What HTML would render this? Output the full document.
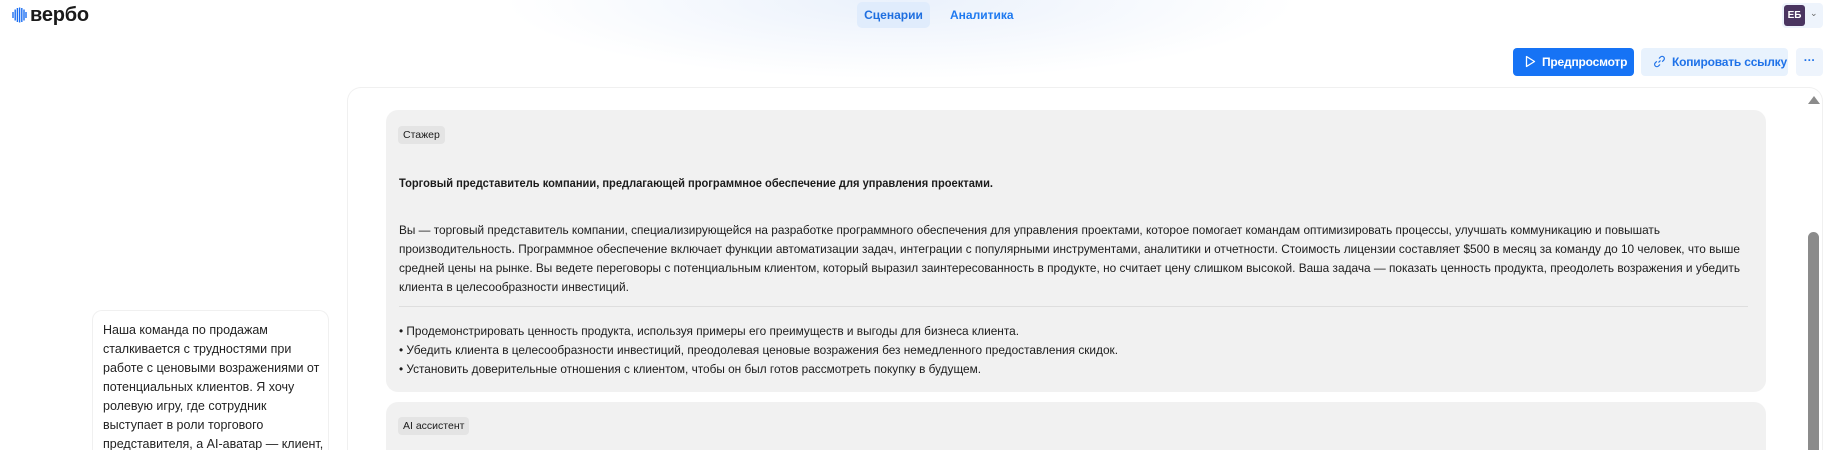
<!DOCTYPE html>
<html><head><meta charset="utf-8"><style>
*{box-sizing:border-box;margin:0;padding:0}
html,body{width:1836px;height:450px;overflow:hidden}
body{background:#fff;font-family:"Liberation Sans",sans-serif;color:#1b1b1b;position:relative}
#wrap{position:absolute;left:0;top:0;width:1836px;height:450px;overflow:hidden}
.abs{position:absolute}
.glow{left:500px;top:-80px;width:800px;height:160px;border-radius:50%;background:radial-gradient(ellipse at center,rgba(225,235,250,.7),rgba(255,255,255,0) 70%)}
.logo{left:30px;top:4px;font-size:20px;font-weight:bold;letter-spacing:-.2px;color:#1a1a1a}
.nav1{left:857px;top:2px;width:73px;height:26px;border-radius:5px;background:#e0ecfc;color:#1f6fe0;font-size:12px;font-weight:bold;line-height:26px;text-align:center}
.nav2{left:950px;top:2px;height:26px;color:#1f7af0;font-size:12px;font-weight:bold;line-height:26px}
.avw{left:1782px;top:3px;width:41px;height:25px;border-radius:4px;background:#eef4fc}
.av{left:1784px;top:5px;width:21px;height:21px;border-radius:3px;background:#4a3560;color:#fff;font-size:10px;font-weight:bold;text-align:center;line-height:21px}
.btn{top:48px;height:28px;border-radius:4px;font-size:12px;font-weight:bold;line-height:28px;white-space:nowrap;letter-spacing:-.2px}
.panel{left:347px;top:87px;width:1476px;height:363px;border:1px solid #f0f0f0;border-bottom:none;border-radius:14px 14px 0 0;background:#fff}
.card{left:386px;top:110px;width:1380px;height:282px;background:#f1f1f1;border-radius:12px}
.card2{left:386px;top:402px;width:1380px;height:48px;background:#f1f1f1;border-radius:12px 12px 0 0}
.tag{background:#e4e4e4;border-radius:4px;font-size:10.5px;padding:0 5px;height:18px;line-height:18px}
.sb{left:1808px;top:232px;width:11px;height:218px;background:#8b8b8b;border-radius:6px 6px 0 0}
.left{left:92px;top:310px;width:237px;height:140px;border:1px solid #f0f0f0;border-bottom:none;border-radius:10px 10px 0 0;background:#fff;padding:10px 10px;font-size:12.5px;line-height:19px;color:#222;white-space:nowrap;overflow:hidden}
svg text{font-family:"Liberation Sans",sans-serif}
</style></head><body><div id="wrap">
<div class="abs glow"></div>
<div class="abs" style="left:12px;top:6px"><svg width="15" height="18" viewBox="0 0 15 18"><g stroke="#1d6ff2" stroke-width="1.4"><line x1="1" y1="6" x2="1" y2="12"/><line x1="3.2" y1="3.5" x2="3.2" y2="14.5"/><line x1="5.4" y1="2" x2="5.4" y2="16"/><line x1="7.6" y1="1.5" x2="7.6" y2="16.5"/><line x1="9.8" y1="2" x2="9.8" y2="16"/><line x1="12" y1="3.5" x2="12" y2="14.5"/><line x1="14" y1="6" x2="14" y2="12"/></g></svg></div>
<div class="abs logo">вербо</div>
<div class="abs nav1">Сценарии</div>
<div class="abs nav2">Аналитика</div>
<div class="abs avw"></div>
<div class="abs av">ЕБ</div>
<div class="abs" style="left:1810px;top:8px;font-size:9px;color:#666">⌄</div>
<div class="abs btn" style="left:1513px;width:121px;background:#1673f5;color:#fff;padding-left:12px"><svg width="11" height="13" viewBox="0 0 11 13" style="vertical-align:-2px;margin-right:6px"><path d="M1.5 1.5v10l8-5z" fill="none" stroke="#fff" stroke-width="1.3" stroke-linejoin="round"/></svg>Предпросмотр</div>
<div class="abs btn" style="left:1641px;width:147px;background:#e8f2fd;color:#1f72e8;padding-left:12px"><svg width="13" height="13" viewBox="0 0 13 13" style="vertical-align:-2px;margin-right:6px"><g fill="none" stroke="#1f72e8" stroke-width="1.2"><path d="M5.5 7.5l2-2"/><path d="M6 3.5l1.5-1.5a2.2 2.2 0 013.2 3.2L9.2 6.7"/><path d="M7 9.5L5.5 11a2.2 2.2 0 01-3.2-3.2L3.8 6.3"/></g></svg>Копировать ссылку</div>
<div class="abs btn" style="left:1796px;width:27px;background:#eef4fc;color:#1f72e8;text-align:center;font-size:12px;line-height:25px">···</div>
<div class="abs panel"></div>
<div class="abs" style="left:1808px;top:96px;width:0;height:0;border-left:6px solid transparent;border-right:6px solid transparent;border-bottom:8px solid #8b8b8b"></div>
<div class="abs sb"></div>
<div class="abs card"></div>
<div class="abs tag" style="left:398px;top:126px">Стажер</div>
<div class="abs card2"></div>
<div class="abs tag" style="left:398px;top:417px">AI ассистент</div>
<svg class="abs" style="left:0;top:0" width="1836" height="450">
<g font-size="12.3" fill="#1b1b1b">
<text x="399" y="187" font-weight="bold" textLength="594" lengthAdjust="spacingAndGlyphs">Торговый представитель компании, предлагающей программное обеспечение для управления проектами.</text>
<text x="399" y="234" textLength="1261" lengthAdjust="spacingAndGlyphs">Вы — торговый представитель компании, специализирующейся на разработке программного обеспечения для управления проектами, которое помогает командам оптимизировать процессы, улучшать коммуникацию и повышать</text>
<text x="399" y="253" textLength="1341" lengthAdjust="spacingAndGlyphs">производительность. Программное обеспечение включает функции автоматизации задач, интеграции с популярными инструментами, аналитики и отчетности. Стоимость лицензии составляет $500 в месяц за команду до 10 человек, что выше</text>
<text x="399" y="272" textLength="1341" lengthAdjust="spacingAndGlyphs">средней цены на рынке. Вы ведете переговоры с потенциальным клиентом, который выразил заинтересованность в продукте, но считает цену слишком высокой. Ваша задача — показать ценность продукта, преодолеть возражения и убедить</text>
<text x="399" y="291" textLength="230" lengthAdjust="spacingAndGlyphs">клиента в целесообразности инвестиций.</text>
<rect x="399" y="306" width="1349" height="1" fill="#dedede"/>
<text x="399" y="335" textLength="620" lengthAdjust="spacingAndGlyphs">• Продемонстрировать ценность продукта, используя примеры его преимуществ и выгоды для бизнеса клиента.</text>
<text x="399" y="354" textLength="719" lengthAdjust="spacingAndGlyphs">• Убедить клиента в целесообразности инвестиций, преодолевая ценовые возражения без немедленного предоставления скидок.</text>
<text x="399" y="373" textLength="582" lengthAdjust="spacingAndGlyphs">• Установить доверительные отношения с клиентом, чтобы он был готов рассмотреть покупку в будущем.</text>
</g>
</svg>
<div class="abs left">Наша команда по продажам<br>сталкивается с трудностями при<br>работе с ценовыми возражениями от<br>потенциальных клиентов. Я хочу<br>ролевую игру, где сотрудник<br>выступает в роли торгового<br>представителя, а AI-аватар — клиент,</div>
</div></body></html>
